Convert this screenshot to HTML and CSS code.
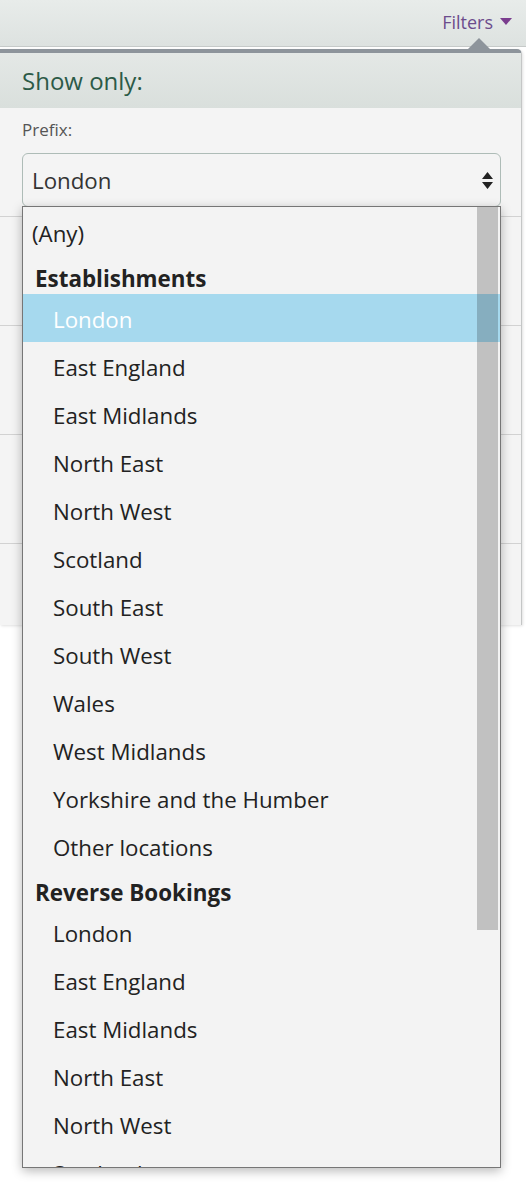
FILE: index.html
```html
<!DOCTYPE html>
<html lang="en">
<head>
<meta charset="utf-8">
<title>Filters</title>
<link rel="stylesheet" href="styles.css">
</head>
<body>
<header class="topbar">
  <span class="filters">Filters<svg class="caret" width="12" height="7" viewBox="0 0 12 7"><path d="M0 0h12L6 7z" fill="#7a3d8e"/></svg></span>
</header>
<div class="popover">
  <span class="arrow"></span>
  <div class="pop-head">Show only:</div>
  <div class="pop-body">
    <div class="field first">
      <div class="label">Prefix:</div>
      <div class="select">
        <span>London</span>
        <svg class="updown" width="11" height="17" viewBox="0 0 11 17"><path d="M5.5 0L11 7H0z M0 10h11L5.5 17z" fill="#222"/></svg>
      </div>
    </div>
    <div class="field"></div>
    <div class="field"></div>
    <div class="field"></div>
    <div class="field last"></div>
  </div>
</div>
<div class="listbox">
  <div class="thumb"></div>
  <div class="opt top">(Any)</div>
  <div class="group">Establishments</div>
  <div class="opt sel">London</div>
  <div class="opt">East England</div>
  <div class="opt">East Midlands</div>
  <div class="opt">North East</div>
  <div class="opt">North West</div>
  <div class="opt">Scotland</div>
  <div class="opt">South East</div>
  <div class="opt">South West</div>
  <div class="opt">Wales</div>
  <div class="opt">West Midlands</div>
  <div class="opt">Yorkshire and the Humber</div>
  <div class="opt">Other locations</div>
  <div class="group">Reverse Bookings</div>
  <div class="opt">London</div>
  <div class="opt">East England</div>
  <div class="opt">East Midlands</div>
  <div class="opt">North East</div>
  <div class="opt">North West</div>
  <div class="opt">Scotland</div>
</div>
</body>
</html>
```
FILE: styles.css
```css
html, body {
  margin: 0;
  padding: 0;
  background: #ffffff;
  font-family: "Open Sans", "Noto Sans", sans-serif;
  color: #222;
}
body {
  width: 526px;
  height: 1186px;
  overflow: hidden;
  position: relative;
}
.topbar {
  height: 46px;
  border-bottom: 1px solid #c6cac9;
  background: linear-gradient(#e8ecea, #dde2e0);
  display: flex;
  justify-content: flex-end;
  box-sizing: content-box;
}
.filters {
  font-size: 18px;
  line-height: 20px;
  padding-top: 12px;
  padding-right: 14px;
  color: #6c4c8c;
  display: flex;
  align-items: flex-start;
}
.caret {
  margin-left: 7px;
  margin-top: 6px;
}
.popover {
  position: relative;
  margin-top: 2px;
  width: 521px;
  border-top: 4px solid #8d949b;
  border-right: 1px solid #c4c6c6;
  border-top-right-radius: 5px;
  box-shadow: 1px 1px 3px rgba(0, 0, 0, 0.12);
}
.arrow {
  position: absolute;
  top: -15px;
  left: 468px;
  width: 0;
  height: 0;
  border-left: 11px solid transparent;
  border-right: 11px solid transparent;
  border-bottom: 11px solid #8d949b;
}
.pop-head {
  height: 55px;
  line-height: 55px;
  padding-left: 22px;
  font-size: 24px;
  color: #2c5a47;
  background: linear-gradient(#e4e8e6, #d9dfdc);
}
.pop-body {
  background: #f4f4f4;
}
.field {
  height: 108px;
  border-bottom: 1px solid #d2d2d2;
}
.field.first {
  height: auto;
  padding: 12px 20px 9px 22px;
}
.field.last {
  height: 81px;
  border-bottom: none;
}
.label {
  font-size: 17px;
  line-height: 20px;
  color: #555;
}
.select {
  margin-top: 13px;
  height: 54px;
  box-sizing: border-box;
  border: 1px solid #aebcb7;
  border-radius: 6px;
  padding: 2px 7px 0 9px;
  font-size: 22.3px;
  line-height: 50px;
  color: #333;
  display: flex;
  justify-content: space-between;
  align-items: center;
}
.updown {
  margin-top: -2px;
}
.listbox {
  position: absolute;
  top: 206px;
  left: 22px;
  width: 479px;
  height: 962px;
  box-sizing: border-box;
  border: 1px solid #767676;
  background: #f3f3f3;
  overflow: hidden;
  box-shadow: 0 3px 10px rgba(0, 0, 0, 0.28);
}
.thumb {
  position: absolute;
  top: 0;
  right: 2px;
  width: 21px;
  height: 723px;
  background: #c1c1c1;
}
.opt {
  position: relative;
  height: 48px;
  box-sizing: border-box;
  padding: 3px 0 0 30px;
  line-height: 45px;
  font-size: 22.3px;
  color: #222;
  white-space: nowrap;
}
.opt.top {
  padding-left: 9px;
  height: 49px;
  padding-top: 4px;
}
.group {
  position: relative;
  height: 38px;
  box-sizing: border-box;
  padding: 9px 0 1px 12px;
  line-height: 28px;
  font-size: 22.4px;
  font-weight: 700;
  color: #222;
}
.opt.sel {
  z-index: 1;
  background: #a6d9ee;
  color: #ffffff;
}
.opt.sel::after {
  content: "";
  position: absolute;
  top: 0;
  bottom: 0;
  right: 2px;
  width: 21px;
  background: #86aebf;
}
```
